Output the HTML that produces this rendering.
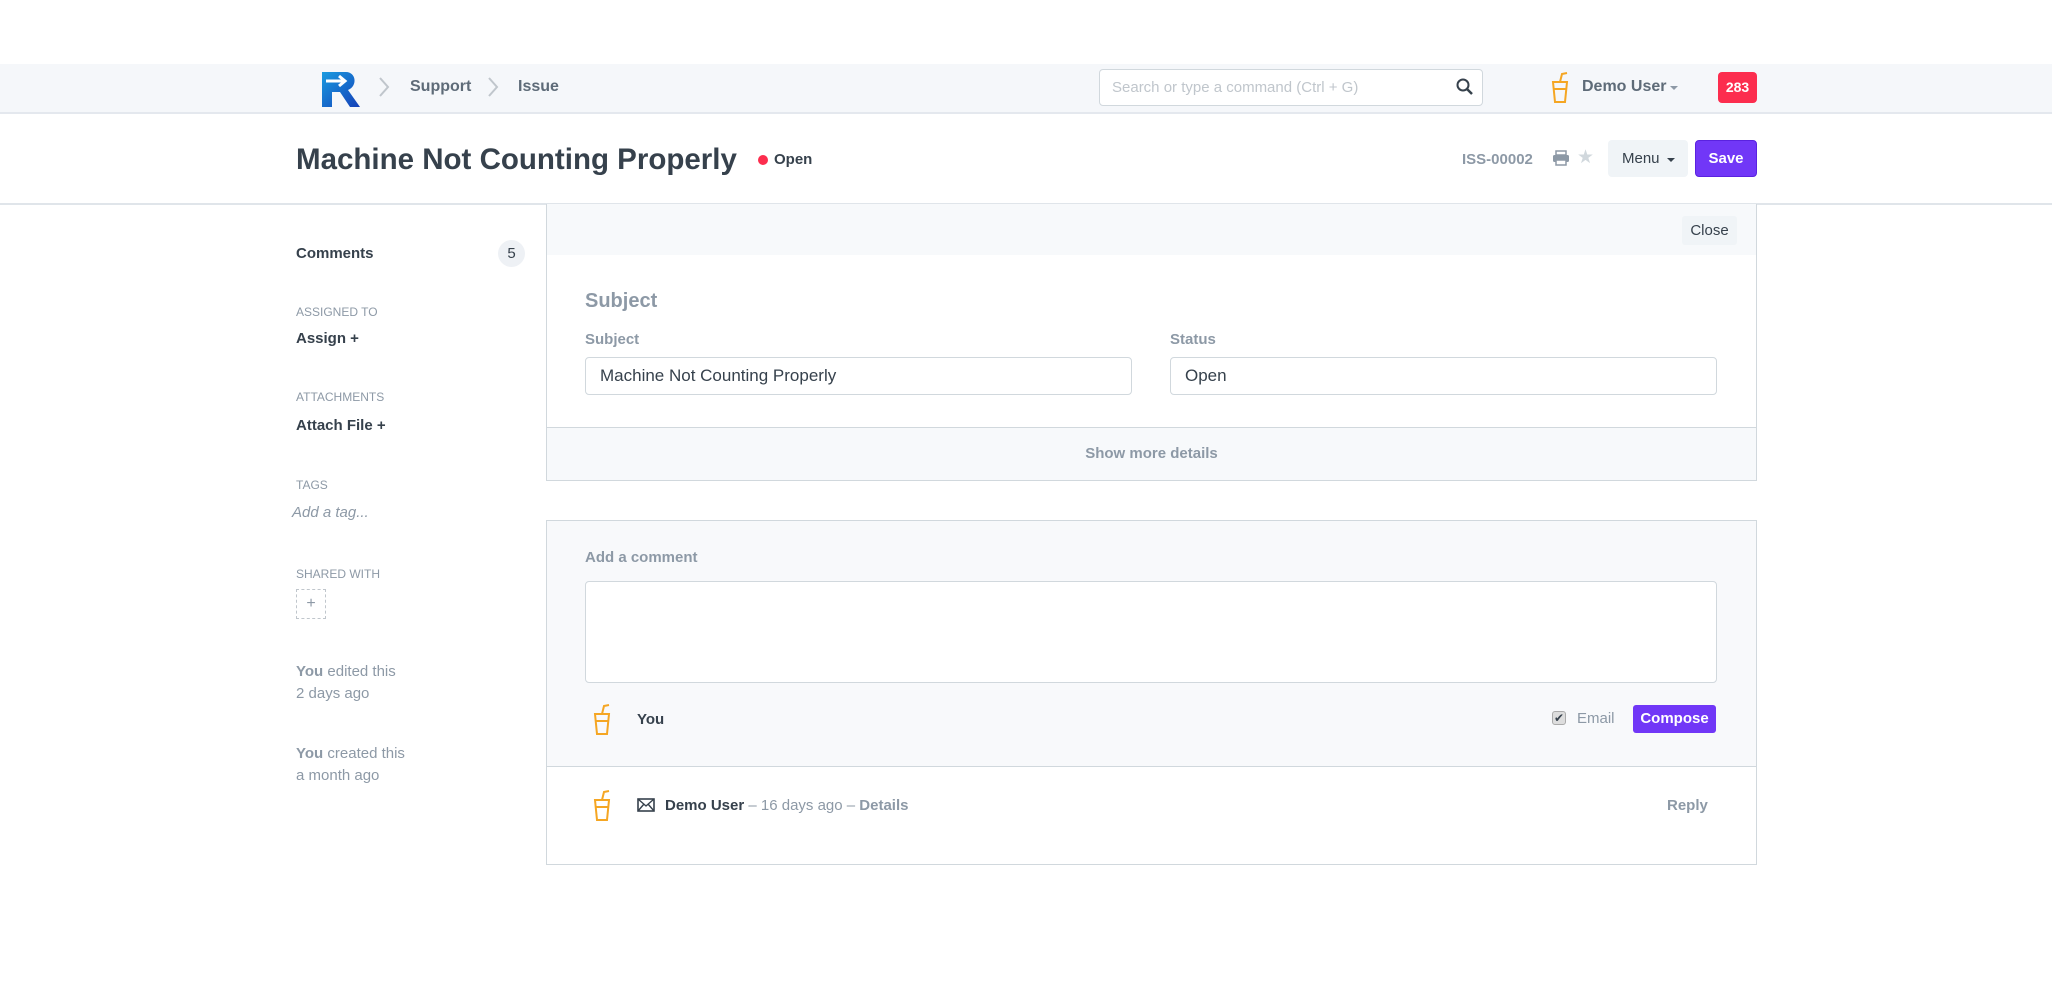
<!DOCTYPE html>
<html><head><meta charset="utf-8"><style>
*{box-sizing:border-box;margin:0;padding:0}
body{width:2052px;height:1008px;background:#fff;font-family:"Liberation Sans",Arial,sans-serif;position:relative;overflow:hidden;color:#36414c}
.a{position:absolute;white-space:nowrap}
.b{font-weight:bold}
</style></head><body>
<div class="a" style="left:0;top:64px;width:2052px;height:50px;background:#f5f7fa;border-bottom:2px solid #e4e8ee"></div>
<svg class="a" style="left:322px;top:72px" width="38" height="35" viewBox="0 0 38 35"><defs><linearGradient id="g" x1="0" y1="0" x2="1" y2="1"><stop offset="0" stop-color="#1a9be0"/><stop offset="1" stop-color="#1440b8"/></linearGradient></defs><path d="M0 0H24C34 0 36 14 26 18L38 35H28L18 20H10V35H0Z" fill="url(#g)"/><path d="M4 9H22M17 4L23 9L17 14" stroke="#fff" stroke-width="3" fill="none"/></svg>
<svg class="a" style="left:378px;top:76px" width="12" height="22"><path d="M2 2L10 11L2 20" stroke="#c0c6cc" stroke-width="2" fill="none"/></svg>
<div class="a b" style="left:410px;top:78px;font-size:16px;color:#5e6b78">Support</div>
<svg class="a" style="left:487px;top:76px" width="12" height="22"><path d="M2 2L10 11L2 20" stroke="#c0c6cc" stroke-width="2" fill="none"/></svg>
<div class="a b" style="left:518px;top:78px;font-size:16px;color:#5e6b78">Issue</div>
<div class="a" style="left:1099px;top:69px;width:384px;height:37px;background:#fff;border:1px solid #d1d8dd;border-radius:4px"></div>
<div class="a" style="left:1112px;top:79px;font-size:15px;color:#c0c6cc">Search or type a command (Ctrl + G)</div>
<svg class="a" style="left:1456px;top:78px" width="18" height="18"><circle cx="7" cy="7" r="5.5" stroke="#36414c" stroke-width="2" fill="none"/><path d="M11 11L16 16" stroke="#36414c" stroke-width="2.5"/></svg>
<svg class="a" style="left:1550px;top:72px" width="20" height="32" viewBox="0 0 20 32"><path d="M3 10H17L15 30H5Z M3 17H17 M10 10L12 2L17 1" stroke="#f5a623" stroke-width="2" fill="none"/></svg>
<div class="a b" style="left:1582px;top:78px;font-size:16px;color:#5e6b78">Demo User</div>
<div class="a" style="left:1670px;top:86px;border:4px solid transparent;border-top:4px solid #8d99a6"></div>
<div class="a b" style="left:1718px;top:72px;width:39px;height:31px;background:#fc2d4e;border-radius:4px;color:#fff;font-size:14px;text-align:center;line-height:31px">283</div>

<div class="a b" style="left:296px;top:143px;font-size:29.5px;color:#36414c">Machine Not Counting Properly</div>
<div class="a" style="left:758px;top:155px;width:10px;height:10px;border-radius:5px;background:#fc2d4e"></div>
<div class="a b" style="left:774px;top:151px;font-size:15px;color:#36414c">Open</div>
<div class="a b" style="left:1462px;top:151px;font-size:15px;color:#8d99a6">ISS-00002</div>
<svg class="a" style="left:1552px;top:150px" width="18" height="16"><rect x="4" y="1" width="10" height="4" fill="none" stroke="#8d99a6" stroke-width="1.5"/><rect x="1" y="5" width="16" height="7" rx="1.5" fill="#8d99a6"/><rect x="4" y="10" width="10" height="5" fill="#fff" stroke="#8d99a6" stroke-width="1.5"/></svg>
<div class="a" style="left:1577px;top:146px;font-size:19px;color:#d1d8dd">★</div>
<div class="a" style="left:1608px;top:140px;width:80px;height:37px;background:#f0f4f7;border-radius:4px;font-size:15px;line-height:37px;color:#36414c;padding-left:14px">Menu</div>
<div class="a" style="left:1667px;top:158px;border:4px solid transparent;border-top:4px solid #36414c"></div>
<div class="a b" style="left:1695px;top:140px;width:62px;height:37px;background:#7137f7;border:1px solid #5a22e0;border-radius:4px;font-size:15px;line-height:35px;color:#fff;text-align:center">Save</div>
<div class="a" style="left:0;top:203px;width:2052px;height:2px;background:#e0e5ea"></div>

<div class="a b" style="left:296px;top:245px;font-size:15px">Comments</div>
<div class="a" style="left:498px;top:240px;width:27px;height:27px;border-radius:14px;background:#eef1f5;font-size:15px;text-align:center;line-height:27px">5</div>
<div class="a" style="left:296px;top:305px;font-size:12px;color:#8d99a6">ASSIGNED TO</div>
<div class="a b" style="left:296px;top:330px;font-size:15px">Assign +</div>
<div class="a" style="left:296px;top:390px;font-size:12px;color:#8d99a6">ATTACHMENTS</div>
<div class="a b" style="left:296px;top:417px;font-size:15px">Attach File +</div>
<div class="a" style="left:296px;top:478px;font-size:12px;color:#8d99a6">TAGS</div>
<div class="a" style="left:292px;top:504px;font-size:15px;font-style:italic;color:#8d99a6">Add a tag...</div>
<div class="a" style="left:296px;top:567px;font-size:12px;color:#8d99a6">SHARED WITH</div>
<div class="a" style="left:296px;top:589px;width:30px;height:30px;border:1px dashed #c0c6cc;font-size:16px;color:#8d99a6;text-align:center;line-height:27px">+</div>
<div class="a" style="left:296px;top:661px;font-size:15px;color:#8d99a6;line-height:22px"><b>You</b> edited this<br>2 days ago</div>
<div class="a" style="left:296px;top:743px;font-size:15px;color:#8d99a6;line-height:22px"><b>You</b> created this<br>a month ago</div>

<div class="a" style="left:546px;top:204px;width:1211px;height:277px;border:1px solid #d1d8dd;border-top:none;background:#fff"></div>
<div class="a" style="left:547px;top:204px;width:1209px;height:51px;background:#f7f9fb"></div>
<div class="a" style="left:1682px;top:216px;width:55px;height:29px;background:#f0f4f7;border-radius:3px;font-size:15px;line-height:29px;text-align:center">Close</div>
<div class="a b" style="left:585px;top:290px;font-size:20px;color:#8d99a6">Subject</div>
<div class="a b" style="left:585px;top:331px;font-size:15px;color:#8d99a6">Subject</div>
<div class="a b" style="left:1170px;top:331px;font-size:15px;color:#8d99a6">Status</div>
<div class="a" style="left:585px;top:357px;width:547px;height:38px;border:1px solid #d1d8dd;border-radius:4px;font-size:17px;line-height:36px;padding-left:14px">Machine Not Counting Properly</div>
<div class="a" style="left:1170px;top:357px;width:547px;height:38px;border:1px solid #d1d8dd;border-radius:4px;font-size:17px;line-height:36px;padding-left:14px">Open</div>
<div class="a b" style="left:547px;top:427px;width:1209px;height:53px;background:#f7f9fb;border-top:1px solid #d1d8dd;font-size:15px;color:#8d99a6;text-align:center;line-height:52px">Show more details</div>

<div class="a" style="left:546px;top:520px;width:1211px;height:345px;border:1px solid #d1d8dd;background:#fff"></div>
<div class="a" style="left:547px;top:521px;width:1209px;height:246px;background:#f8f9fb;border-bottom:1px solid #d1d8dd"></div>
<div class="a b" style="left:585px;top:549px;font-size:15px;color:#8d99a6">Add a comment</div>
<div class="a" style="left:585px;top:581px;width:1132px;height:102px;border:1px solid #d1d8dd;border-radius:4px;background:#fff"></div>
<svg class="a" style="left:592px;top:704px" width="20" height="32" viewBox="0 0 20 32"><path d="M3 10H17L15 30H5Z M3 17H17 M10 10L12 2L17 1" stroke="#f5a623" stroke-width="2" fill="none"/></svg>
<div class="a b" style="left:637px;top:711px;font-size:15px">You</div>
<div class="a" style="left:1552px;top:711px;width:14px;height:14px;border:1px solid #aaa;border-radius:3px;background:#ddd;font-size:12px;line-height:12px;text-align:center">✔</div>
<div class="a" style="left:1577px;top:710px;font-size:15px;color:#8d99a6">Email</div>
<div class="a b" style="left:1633px;top:705px;width:83px;height:28px;background:#7137f7;border-radius:3px;color:#fff;font-size:15px;text-align:center;line-height:28px">Compose</div>
<svg class="a" style="left:592px;top:790px" width="20" height="32" viewBox="0 0 20 32"><path d="M3 10H17L15 30H5Z M3 17H17 M10 10L12 2L17 1" stroke="#f5a623" stroke-width="2" fill="none"/></svg>
<svg class="a" style="left:637px;top:798px" width="18" height="14"><rect x="1" y="1" width="16" height="12" fill="none" stroke="#36414c" stroke-width="1.6"/><path d="M1 1L9 8L17 1M1 13L7 6M17 13L11 6" stroke="#36414c" stroke-width="1.4" fill="none"/></svg>
<div class="a" style="left:665px;top:797px;font-size:15px;color:#8d99a6"><b style="color:#36414c">Demo User</b> – 16 days ago – <b>Details</b></div>
<div class="a b" style="left:1667px;top:797px;font-size:15px;color:#8d99a6">Reply</div>
</body></html>
